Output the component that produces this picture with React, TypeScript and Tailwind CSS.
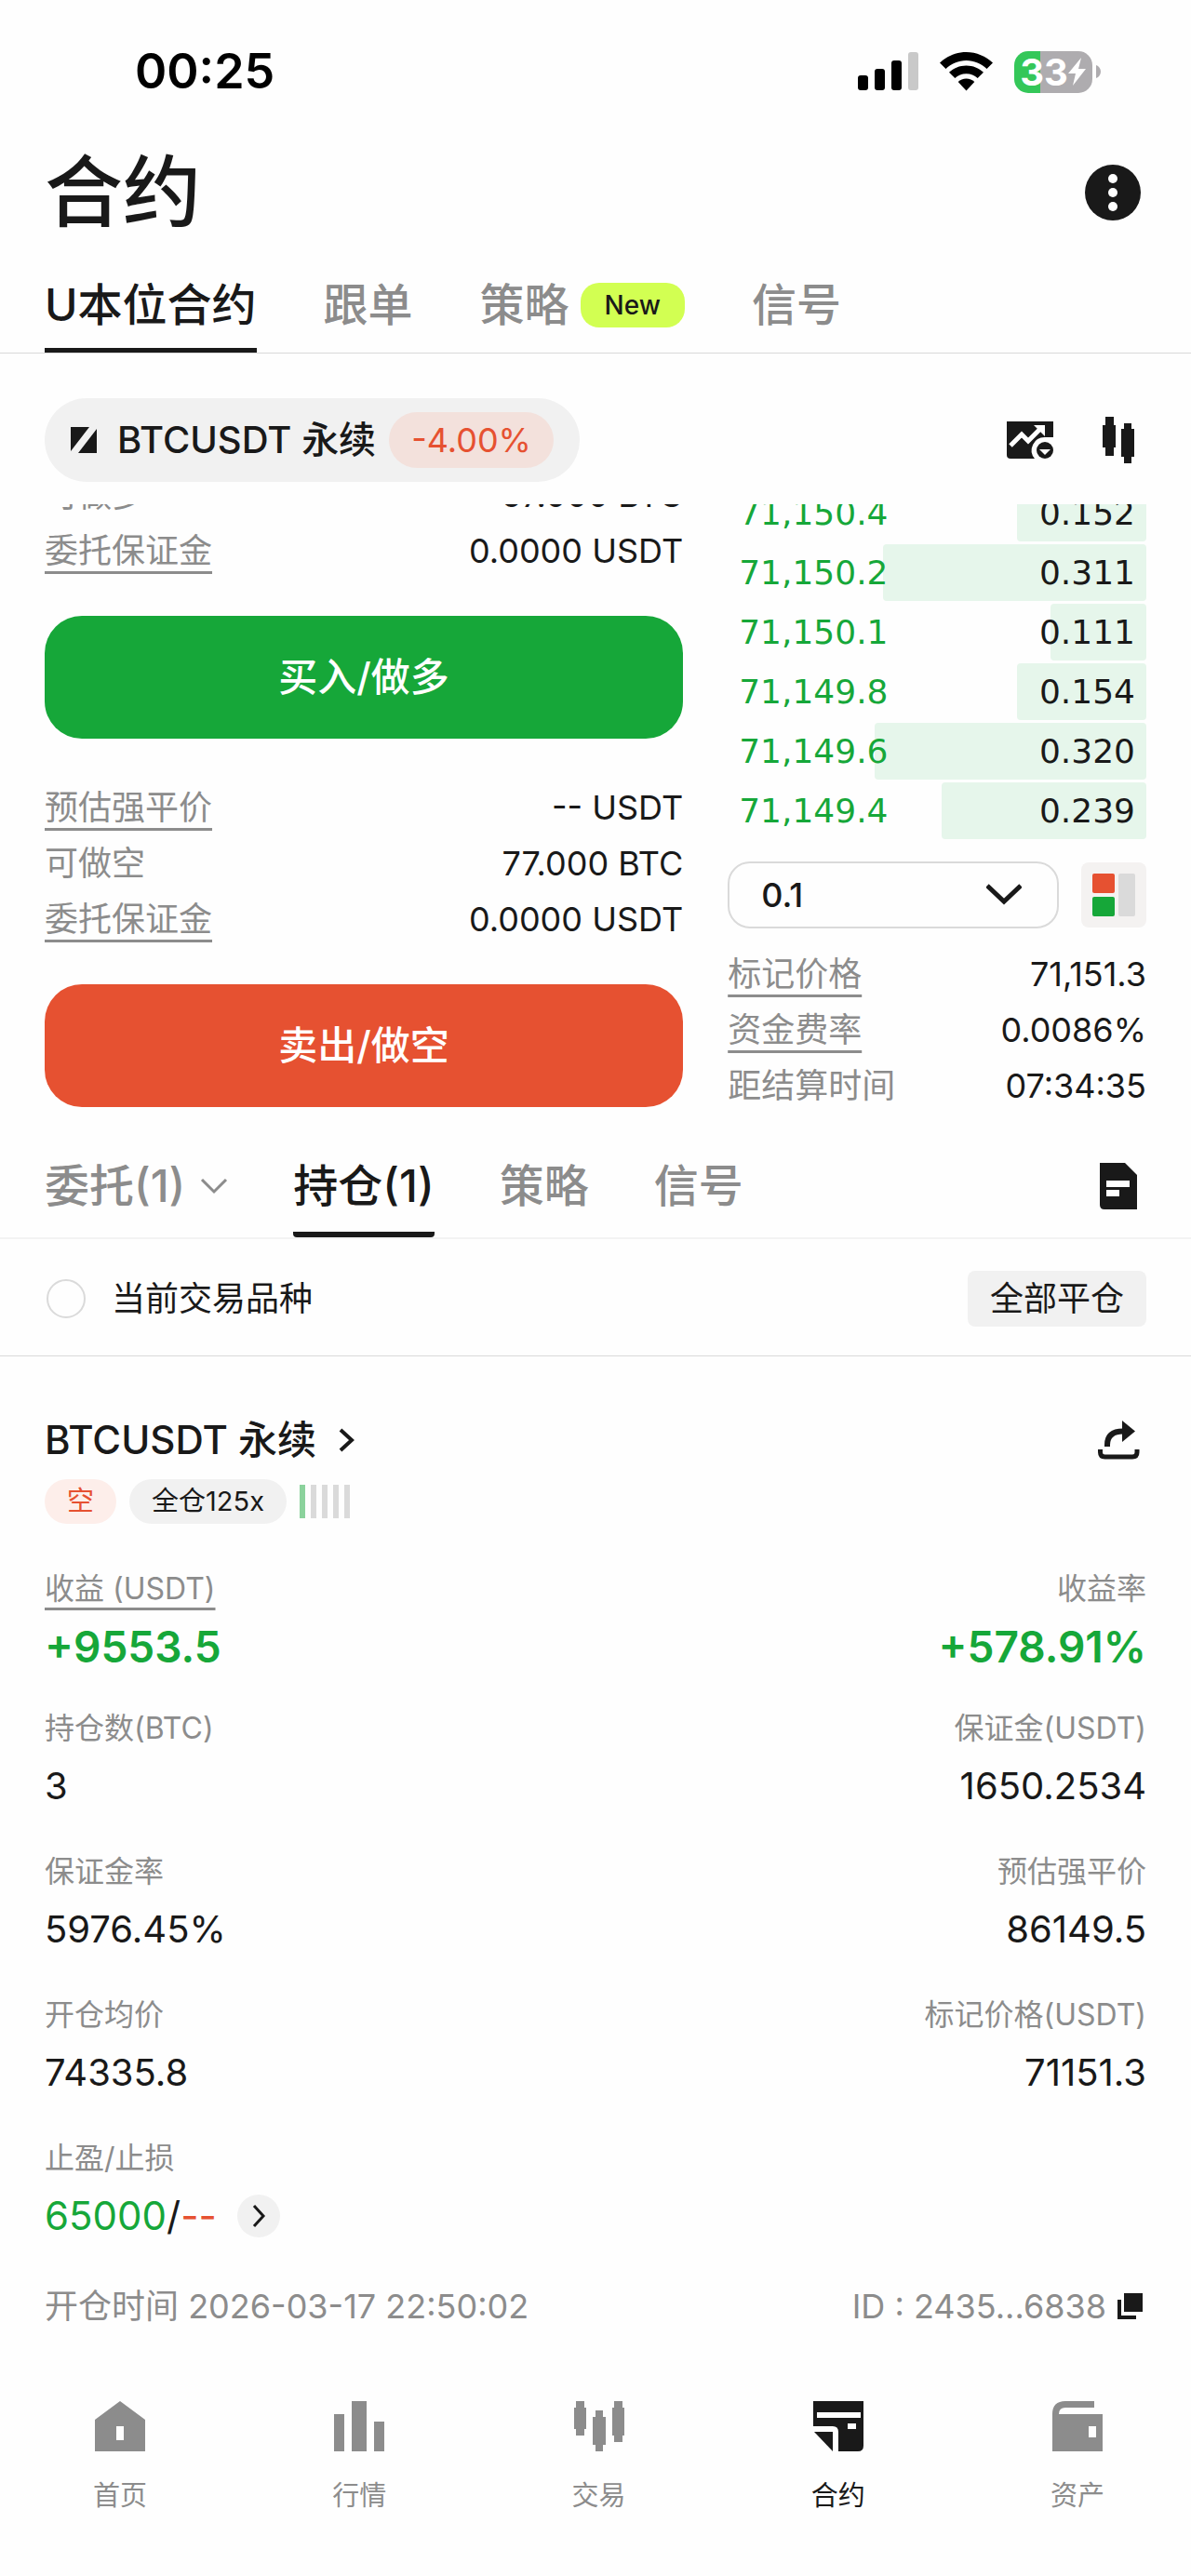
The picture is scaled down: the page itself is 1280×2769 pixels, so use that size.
import { useState } from "react"

const bids = [
  { price: "71,150.4", size: "0.152", depth: 31 },
  { price: "71,150.2", size: "0.311", depth: 63 },
  { price: "71,150.1", size: "0.111", depth: 23 },
  { price: "71,149.8", size: "0.154", depth: 31 },
  { price: "71,149.6", size: "0.320", depth: 65 },
  { price: "71,149.4", size: "0.239", depth: 49 },
]

const stats = [
  ["持仓数(BTC)", "3", "保证金(USDT)", "1650.2534"],
  ["保证金率", "5976.45%", "预估强平价", "86149.5"],
  ["开仓均价", "74335.8", "标记价格(USDT)", "71151.3"],
]

function InfoRow({ label, value, underlined }: { label: string; value: string; underlined?: boolean }) {
  return (
    <div className="flex justify-between text-4xl leading-[60px]">
      <dt className={underlined ? "text-[#8c8c8c] underline decoration-[3px] underline-offset-[9px] [text-decoration-skip-ink:none]" : "text-[#8c8c8c]"}>
        {label}
      </dt>
      <dd>{value}</dd>
    </div>
  )
}

function StatusBar() {
  return (
    <div className="flex items-center justify-between pt-12 pr-[97px] pl-[145px] text-black">
      <time className="text-[52px] leading-[58px] font-semibold">00:25</time>
      <div className="flex items-center">
        <svg width="65" height="42" viewBox="0 0 65 42" aria-hidden="true">
          <rect x="0" y="25" width="11" height="16" rx="3" />
          <rect x="18" y="18" width="11" height="23" rx="3" />
          <rect x="36" y="9" width="11" height="32" rx="3" />
          <rect x="54" y="0" width="11" height="41" rx="3" fill="#c9c9c9" />
        </svg>
        <svg className="ml-[23px]" width="57" height="42" viewBox="0 0 57 42" aria-hidden="true">
          <path d="M28.500 0C17.500 0 7.500 4.500 0 11.500L6.500 18C12.300 12.600 20 9 28.500 9S44.700 12.600 50.500 18L57 11.500C49.500 4.500 39.500 0 28.500 0Z" />
          <path d="M28.500 14.500C21.300 14.500 15 17.300 10 21.800L16.300 28C19.600 25 23.800 23.200 28.500 23.200S37.400 25 40.700 28L47 21.800C42 17.300 35.700 14.500 28.500 14.500Z" />
          <path d="M28.500 28.500C25 28.500 22 29.800 19.700 32L28.500 41.500L37.300 32C35 29.800 32 28.500 28.500 28.500Z" />
        </svg>
        <div className="ml-[23px] flex h-[45px] w-[84px] items-center justify-center rounded-[15px] bg-linear-to-r from-[#34c759] from-33% to-[#aeacaf] to-33%">
          <span className="text-[40px] leading-[45px] font-bold text-white">33</span>
          <svg width="20" height="30" viewBox="0 0 20 30" fill="#fff" aria-hidden="true">
            <path d="M14 0L0 17H8L5 30L19 12H11Z" />
          </svg>
        </div>
        <svg className="ml-1" width="5" height="14" viewBox="0 0 5 14" fill="#aeacaf" aria-hidden="true">
          <path d="M0 0C3 1 5 4 5 7S3 13 0 14Z" />
        </svg>
      </div>
    </div>
  )
}

function BottomNav() {
  const item = "flex w-[58px] flex-col items-center text-[#8c8c8c]"
  const label = "mt-7 text-[29px] leading-10 whitespace-nowrap"
  return (
    <nav className="mt-[77px] flex justify-between pr-[93px] pb-16 pl-25">
      <a href="#home" className={item}>
        <svg width="54" height="54" viewBox="0 0 54 54" fill="currentColor" aria-hidden="true">
          <path fillRule="evenodd" d="M27 0L54 20V54H0V20ZM23 27V42H31V27Z" />
        </svg>
        <span className={label}>首页</span>
      </a>
      <a href="#markets" className={item}>
        <svg width="54" height="54" viewBox="0 0 54 54" fill="currentColor" aria-hidden="true">
          <path d="M0 14H11V54H0ZM19 0H35V54H19ZM43 22H54V54H43Z" />
        </svg>
        <span className={label}>行情</span>
      </a>
      <a href="#trade" className={item}>
        <svg width="54" height="54" viewBox="0 0 54 54" fill="currentColor" aria-hidden="true">
          <path d="M2 0H11V7H13V30H11V37H2V30H0V7H2ZM23 10H31V17H34V47H31V54H23V47H20V17H23ZM43 0H52V7H54V37H52V44H43V37H41V7H43Z" />
        </svg>
        <span className={label}>交易</span>
      </a>
      <a href="#futures" aria-current="page" className="flex w-[58px] flex-col items-center text-[#191919]">
        <svg width="54" height="54" viewBox="0 0 54 54" fill="currentColor" aria-hidden="true">
          <path fillRule="evenodd" d="M0 0H54V48Q54 54 48 54H27V33Q27 27 21 27H0ZM4 12V18H51V12ZM37 24V30H46V24Z" />
          <path d="M1 33H21V54Z" />
        </svg>
        <span className={label}>合约</span>
      </a>
      <a href="#assets" className={item}>
        <svg width="54" height="54" viewBox="0 0 54 54" fill="currentColor" aria-hidden="true">
          <path fillRule="evenodd" d="M14 0H45V7H14Q7 7 7 14H54V54H0V14Q0 0 14 0ZM39 27V39H47V27Z" />
        </svg>
        <span className={label}>资产</span>
      </a>
    </nav>
  )
}

export default function App() {
  const [onlyCurrent, setOnlyCurrent] = useState(false)
  const [step, setStep] = useState("0.1")

  return (
    <main className="min-h-screen bg-[#fefefe] font-['Inter','Noto_Sans_CJK_SC',sans-serif] text-[#191919]">
      <StatusBar />

      <header className="flex items-center justify-between px-12 pt-14 pr-[54px]">
        <h1 className="text-[84px] leading-[90px] font-medium">合约</h1>
        <button aria-label="更多">
          <svg width="60" height="60" viewBox="0 0 60 60" aria-hidden="true">
            <circle cx="30" cy="30" r="30" fill="#191919" />
            <circle cx="30" cy="15" r="5" fill="#fff" />
            <circle cx="30" cy="30" r="5" fill="#fff" />
            <circle cx="30" cy="45" r="5" fill="#fff" />
          </svg>
        </button>
      </header>

      <nav className="flex gap-18 border-b border-[#d9d9d9] px-12 pt-[46px] text-5xl leading-[60px] font-medium text-[#8c8c8c]">
        <button className="border-b-5 border-[#191919] pb-4 text-[#191919]">U本位合约</button>
        <button className="pb-[21px]">跟单</button>
        <button className="flex items-center gap-3 pb-[21px]">
          策略
          <span className="rounded-[20px] bg-[#d2ff52] px-[26px] text-[28px] leading-12 text-[#191919]">New</span>
        </button>
        <button className="pb-[21px]">信号</button>
      </nav>

      <div className="flex items-center justify-between px-12 pt-12 pr-[60px] pb-6">
        <button className="flex items-center rounded-full bg-[#f1f1f1] py-[15px] pr-7 pl-7">
          <svg width="28" height="28" viewBox="0 0 28 28" fill="#191919" aria-hidden="true">
            <path d="M0 0H20L0 26ZM28 2V28H8Z" />
          </svg>
          <span className="ml-[22px] text-[40px] leading-[60px] font-medium">BTCUSDT 永续</span>
          <span className="ml-3.5 rounded-[30px] bg-[#f3e1dc] px-6 text-4xl leading-[60px] text-[#e65131]">-4.00%</span>
        </button>
        <div className="flex items-center gap-[53px]">
          <button aria-label="图表">
            <svg width="50" height="40" viewBox="0 0 50 40" aria-hidden="true">
              <path d="M0 0H50V40H4Q0 40 0 36Z" fill="#191919" />
              <path d="M4 26L16 14L23 21L36 8" fill="none" stroke="#fefefe" strokeWidth="5" />
              <path d="M29 4H41V16Z" fill="#fefefe" />
              <path d="M50 17H41A14 14 0 0 0 30 40H50Z" fill="#fefefe" />
              <circle cx="41" cy="31" r="9" fill="#191919" />
              <path d="M35 30H47L41 36Z" fill="#fefefe" />
            </svg>
          </button>
          <button aria-label="K线">
            <svg width="35" height="50" viewBox="0 0 35 50" fill="#191919" aria-hidden="true">
              <path d="M3 0H12V9H14V33H12V42H3V33H0V9H3ZM23 7H31V13H34V43H31V50H23V43H20V13H23Z" />
            </svg>
          </button>
        </div>
      </div>

      {/* order form and book, scrolled under the symbol bar */}
      <div className="overflow-hidden px-12">
        <div className="-mt-10 flex gap-12">
          <section className="flex-[685]">
            <dl>
              <InfoRow label="可做多" value="67.000 BTC" />
              <InfoRow label="委托保证金" value="0.0000 USDT" underlined />
            </dl>
            <button className="mt-10 w-full rounded-[40px] bg-[#16a739] py-9 text-[42px] leading-[60px] font-medium text-white">买入/做多</button>
            <dl className="mt-11">
              <InfoRow label="预估强平价" value="-- USDT" underlined />
              <InfoRow label="可做空" value="77.000 BTC" />
              <InfoRow label="委托保证金" value="0.0000 USDT" underlined />
            </dl>
            <button className="mt-10 w-full rounded-[40px] bg-[#e65131] py-9 text-[42px] leading-[60px] font-medium text-white">卖出/做空</button>
          </section>

          <section className="flex-[449]">
            <ul className="flex flex-col gap-[3px] pt-[19px] font-['DejaVu_Sans',sans-serif] text-4xl leading-[61px]">
              {bids.map((b) => (
                <li key={b.price} className="relative flex justify-between px-3">
                  <span className="absolute inset-y-0 right-0 rounded bg-[#e6f6eb]" style={{ width: `${b.depth}%` }} />
                  <span className="relative text-[#16a739]">{b.price}</span>
                  <span className="relative">{b.size}</span>
                </li>
              ))}
            </ul>
            <div className="mt-6 flex items-center gap-6">
              <label className="relative flex-1">
                <select
                  aria-label="精度"
                  value={step}
                  onChange={(e) => setStep(e.target.value)}
                  className="h-18 w-full appearance-none rounded-3xl border-2 border-[#dadada] px-[34px] text-4xl font-medium"
                >
                  <option>0.1</option>
                  <option>1</option>
                  <option>10</option>
                </select>
                <svg className="pointer-events-none absolute top-6 right-10" width="38" height="24" viewBox="0 0 38 24" fill="none" stroke="#191919" strokeWidth="5" aria-hidden="true">
                  <path d="M1 2L19 19L37 2" />
                </svg>
              </label>
              <button aria-label="盘口样式" className="rounded-lg bg-[#f4f2f1] p-3">
                <svg width="46" height="46" viewBox="0 0 46 46" aria-hidden="true">
                  <rect width="24" height="21" rx="2" fill="#e65131" />
                  <rect y="25" width="24" height="21" rx="2" fill="#16a739" />
                  <rect x="28" width="18" height="46" rx="2" fill="#dadada" />
                </svg>
              </button>
            </div>
            <dl className="mt-[19px]">
              <InfoRow label="标记价格" value="71,151.3" underlined />
              <InfoRow label="资金费率" value="0.0086%" underlined />
              <InfoRow label="距结算时间" value="07:34:35" />
            </dl>
          </section>
        </div>
      </div>

      <nav className="flex gap-[70px] border-b-2 border-[#f3f3f3] pt-12 pr-[58px] pl-12 text-5xl leading-[60px] font-medium text-[#8c8c8c]">
        <button className="flex items-center gap-4 pb-[25px]">
          委托(1)
          <svg width="30" height="18" viewBox="0 0 30 18" fill="none" stroke="currentColor" strokeWidth="3" aria-hidden="true">
            <path d="M2 2L15 15L28 2" />
          </svg>
        </button>
        <button className="rounded-b-sm border-b-6 border-[#191919] pb-[19px] text-[#191919]">持仓(1)</button>
        <button className="pb-[25px]">策略</button>
        <button className="pb-[25px]">信号</button>
        <button aria-label="历史记录" className="ml-auto pb-[25px]">
          <svg width="40" height="50" viewBox="0 0 40 50" aria-hidden="true">
            <path d="M0 0H27L40 13V50H5Q0 50 0 45Z" fill="#191919" />
            <path d="M7 19H32V26H7ZM7 29H21V36H7Z" fill="#fefefe" />
          </svg>
        </button>
      </nav>

      <div className="flex items-center justify-between border-b border-[#d9d9d9] px-12 pt-[34px] pb-[31px] text-4xl">
        <label className="flex items-center gap-7">
          <input
            type="checkbox"
            checked={onlyCurrent}
            onChange={(e) => setOnlyCurrent(e.target.checked)}
            className="ml-0.5 size-[42px] appearance-none rounded-full border-2 border-[#dadada] checked:bg-[#191919]"
          />
          当前交易品种
        </label>
        <button className="rounded-lg bg-[#f1f1f1] px-6 leading-[60px]">全部平仓</button>
      </div>

      <article className="px-12 pt-15">
        <div className="flex items-center justify-between">
          <a href="#btcusdt" className="flex items-center gap-6 text-[42px] leading-[60px] font-medium">
            BTCUSDT 永续
            <svg width="17" height="26" viewBox="0 0 17 26" fill="none" stroke="currentColor" strokeWidth="4" aria-hidden="true">
              <path d="M2 2L14 13L2 24" />
            </svg>
          </a>
          <button aria-label="分享" className="mr-1">
            <svg width="50" height="50" viewBox="0 0 50 50" aria-hidden="true">
              <path d="M4.500 35V38Q4.500 43 9.500 43H39Q44 43 44 38V35" fill="none" stroke="#191919" strokeWidth="5" />
              <path d="M12 32V30Q12 15.500 29 15.500" fill="none" stroke="#191919" strokeWidth="6" />
              <path d="M28 4L42 15.500L28 27Z" fill="#191919" />
            </svg>
          </button>
        </div>

        <div className="mt-3 flex items-center gap-3.5 text-[29px] leading-12">
          <span className="rounded-full bg-[#fdeeea] px-6 text-[#e65131]">空</span>
          <span className="rounded-full bg-[#f1f1f1] px-6">全仓125x</span>
          <span className="flex gap-1.5">
            <i className="h-9 w-1.5 bg-[#8bd29c]" />
            <i className="h-9 w-1.5 bg-[#dadada]" />
            <i className="h-9 w-1.5 bg-[#dadada]" />
            <i className="h-9 w-1.5 bg-[#dadada]" />
            <i className="h-9 w-1.5 bg-[#dadada]" />
          </span>
        </div>

        <dl className="mt-12 flex justify-between">
          <div>
            <dt className="text-[32px] leading-11 text-[#8c8c8c] underline decoration-[3px] underline-offset-[9px] [text-decoration-skip-ink:none]">收益 (USDT)</dt>
            <dd className="mt-2.5 text-[46px] leading-[60px] font-semibold text-[#16a739]">+9553.5</dd>
          </div>
          <div className="text-right">
            <dt className="text-[32px] leading-11 text-[#8c8c8c]">收益率</dt>
            <dd className="mt-2.5 text-[46px] leading-[60px] font-semibold text-[#16a739]">+578.91%</dd>
          </div>
        </dl>

        <dl className="mt-9 flex flex-col gap-10 text-[40px] leading-[60px]">
          {stats.map(([leftLabel, left, rightLabel, right]) => (
            <div key={leftLabel} className="flex justify-between">
              <div>
                <dt className="text-[32px] leading-11 text-[#8c8c8c]">{leftLabel}</dt>
                <dd className="mt-2.5">{left}</dd>
              </div>
              <div className="text-right">
                <dt className="text-[32px] leading-11 text-[#8c8c8c]">{rightLabel}</dt>
                <dd className="mt-2.5">{right}</dd>
              </div>
            </div>
          ))}
          <div>
            <dt className="text-[32px] leading-11 text-[#8c8c8c]">止盈/止损</dt>
            <dd className="mt-2.5 flex items-center gap-[22px]">
              <span className="text-[42px]">
                <span className="text-[#16a739]">65000</span>/<span className="text-[#e65131]">--</span>
              </span>
              <button aria-label="修改止盈止损" className="flex size-[46px] items-center justify-center rounded-full bg-[#f1f1f1]">
                <svg width="16" height="26" viewBox="0 0 16 26" fill="none" stroke="#191919" strokeWidth="3" aria-hidden="true">
                  <path d="M3 2L13 13L3 24" />
                </svg>
              </button>
            </dd>
          </div>
        </dl>

        <div className="mt-[42px] flex justify-between text-4xl leading-[50px] text-[#8c8c8c]">
          <span>开仓时间 2026-03-17 22:50:02</span>
          <span className="flex items-center gap-3">
            ID : 2435...6838
            <button aria-label="复制">
              <svg className="mr-1" width="27" height="28" viewBox="0 0 27 28" fill="#191919" aria-hidden="true">
                <path d="M7 0H27V20H7ZM0 7H4V24H20V28H0Z" />
              </svg>
            </button>
          </span>
        </div>
      </article>

      <BottomNav />
    </main>
  )
}
